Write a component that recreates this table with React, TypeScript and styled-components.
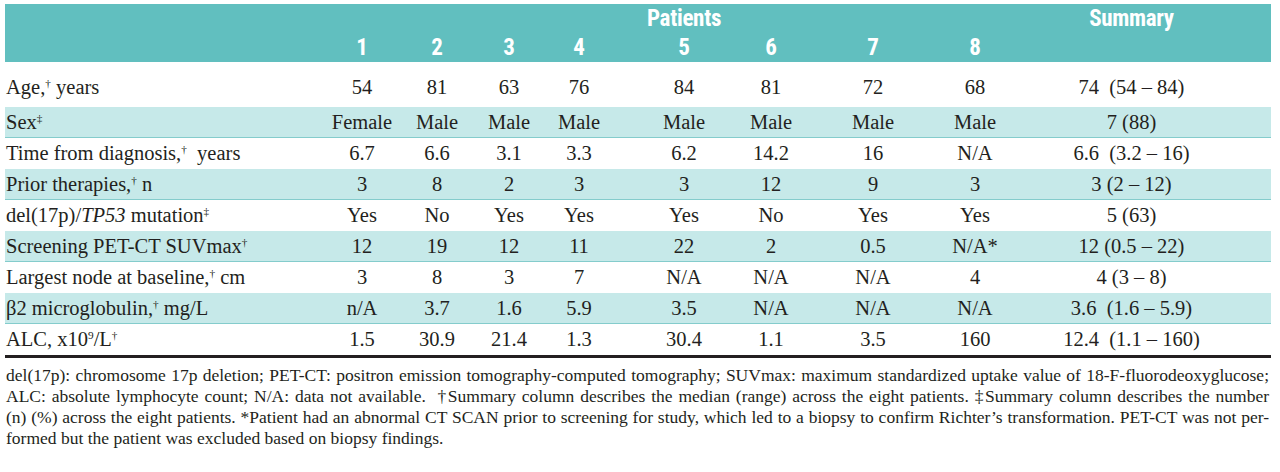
import React from "react";
import styled, { createGlobalStyle } from "styled-components";

const COLUMNS = "319px 76px 74px 70px 70px 140px 34px 170px 34px 279px";

const GlobalStyle = createGlobalStyle`
  body {
    margin: 0;
    background: #ffffff;
    color: #231f20;
    font-family: "Liberation Serif", "Times New Roman", serif;
  }
`;

const Page = styled.div`
  width: 1266px;
  padding: 4px 0 0 5px;
`;

const Header = styled.div`
  display: grid;
  grid-template-columns: ${COLUMNS};
  grid-template-rows: 29px 29px;
  background: #61bfbf;
`;

const HeadCell = styled.div<{ $col: number; $row: number }>`
  grid-column: ${(p) => p.$col};
  grid-row: ${(p) => p.$row};
  display: flex;
  align-items: center;
  justify-content: center;
  color: #ffffff;
  font-family: "Liberation Sans Narrow", "Roboto Condensed", "Liberation Sans", sans-serif;
  font-weight: 700;
  font-size: 23px;
  letter-spacing: -0.3px;
`;

const Body = styled.div`
  border-bottom: 3px solid #231f20;
`;

const TableRow = styled.div<{ $band: boolean; $first: boolean }>`
  display: grid;
  grid-template-columns: ${COLUMNS};
  box-sizing: border-box;
  height: ${(p) => (p.$first ? 45 : 31)}px;
  padding-top: ${(p) => (p.$first ? 7 : 0)}px;
  align-items: center;
  background: ${(p) => (p.$band ? "#c6e9e9" : "transparent")};
  border-bottom: 1px solid ${(p) => (p.$band ? "#84cccc" : "transparent")};
  font-size: 20.5px;
`;

const Cell = styled.div`
  display: flex;
  justify-content: center;
  white-space: pre;
`;

const Label = styled.div`
  padding-left: 1px;
  white-space: pre;
`;

const Sup = styled.span`
  font-size: 0.55em;
  position: relative;
  top: -0.6em;
  line-height: 0;
`;

const Footnote = styled.div`
  padding: 7px 2px 0 1px;
  font-size: 17.5px;
  line-height: 21px;
`;

const FootLine = styled.div<{ $last: boolean }>`
  text-align: justify;
  text-align-last: ${(p) => (p.$last ? "left" : "justify")};
  white-space: pre-wrap;
`;

type Row = {
  label: React.ReactNode;
  values: string[];
  summary: string;
};

const Dag = () => <Sup>†</Sup>;
const DDag = () => <Sup>‡</Sup>;

const rows: Row[] = [
  {
    label: (
      <>
        Age,<Dag /> years
      </>
    ),
    values: ["54", "81", "63", "76", "84", "81", "72", "68"],
    summary: "74  (54 – 84)",
  },
  {
    label: (
      <>
        Sex<DDag />
      </>
    ),
    values: ["Female", "Male", "Male", "Male", "Male", "Male", "Male", "Male"],
    summary: "7 (88)",
  },
  {
    label: (
      <>
        Time from diagnosis,<Dag />  years
      </>
    ),
    values: ["6.7", "6.6", "3.1", "3.3", "6.2", "14.2", "16", "N/A"],
    summary: "6.6  (3.2 – 16)",
  },
  {
    label: (
      <>
        Prior therapies,<Dag /> n
      </>
    ),
    values: ["3", "8", "2", "3", "3", "12", "9", "3"],
    summary: "3 (2 – 12)",
  },
  {
    label: (
      <>
        del(17p)/<i>TP53</i> mutation<DDag />
      </>
    ),
    values: ["Yes", "No", "Yes", "Yes", "Yes", "No", "Yes", "Yes"],
    summary: "5 (63)",
  },
  {
    label: (
      <>
        Screening PET-CT SUVmax<Dag />
      </>
    ),
    values: ["12", "19", "12", "11", "22", "2", "0.5", "N/A*"],
    summary: "12 (0.5 – 22)",
  },
  {
    label: (
      <>
        Largest node at baseline,<Dag /> cm
      </>
    ),
    values: ["3", "8", "3", "7", "N/A", "N/A", "N/A", "4"],
    summary: "4 (3 – 8)",
  },
  {
    label: (
      <>
        β2 microglobulin,<Dag /> mg/L
      </>
    ),
    values: ["n/A", "3.7", "1.6", "5.9", "3.5", "N/A", "N/A", "N/A"],
    summary: "3.6  (1.6 – 5.9)",
  },
  {
    label: (
      <>
        ALC, x10<Sup>9</Sup>/L<Dag />
      </>
    ),
    values: ["1.5", "30.9", "21.4", "1.3", "30.4", "1.1", "3.5", "160"],
    summary: "12.4  (1.1 – 160)",
  },
];

const footLines = [
  "del(17p): chromosome 17p deletion; PET-CT: positron emission tomography-computed tomography; SUVmax: maximum standardized uptake value of 18-F-fluorodeoxyglucose;",
  "ALC: absolute lymphocyte count; N/A: data not available.  †Summary column describes the median (range) across the eight patients. ‡Summary column describes the number",
  "(n) (%) across the eight patients. *Patient had an abnormal CT SCAN prior to screening for study, which led to a biopsy to confirm Richter’s transformation. PET-CT was not per-",
  "formed but the patient was excluded based on biopsy findings.",
];

export default function App() {
  return (
    <Page>
      <GlobalStyle />
      <Header>
        <HeadCell $col={6} $row={1}>
          Patients
        </HeadCell>
        <HeadCell $col={10} $row={1}>
          Summary
        </HeadCell>
        {[1, 2, 3, 4, 5, 6, 7, 8].map((n) => (
          <HeadCell key={n} $col={n + 1} $row={2}>
            {n}
          </HeadCell>
        ))}
      </Header>
      <Body>
        {rows.map((r, i) => (
          <TableRow key={i} $band={i % 2 === 1} $first={i === 0}>
            <Label>{r.label}</Label>
            {r.values.map((v, j) => (
              <Cell key={j}>{v}</Cell>
            ))}
            <Cell>{r.summary}</Cell>
          </TableRow>
        ))}
      </Body>
      <Footnote>
        {footLines.map((line, i) => (
          <FootLine key={i} $last={i === footLines.length - 1}>
            {line}
          </FootLine>
        ))}
      </Footnote>
    </Page>
  );
}
